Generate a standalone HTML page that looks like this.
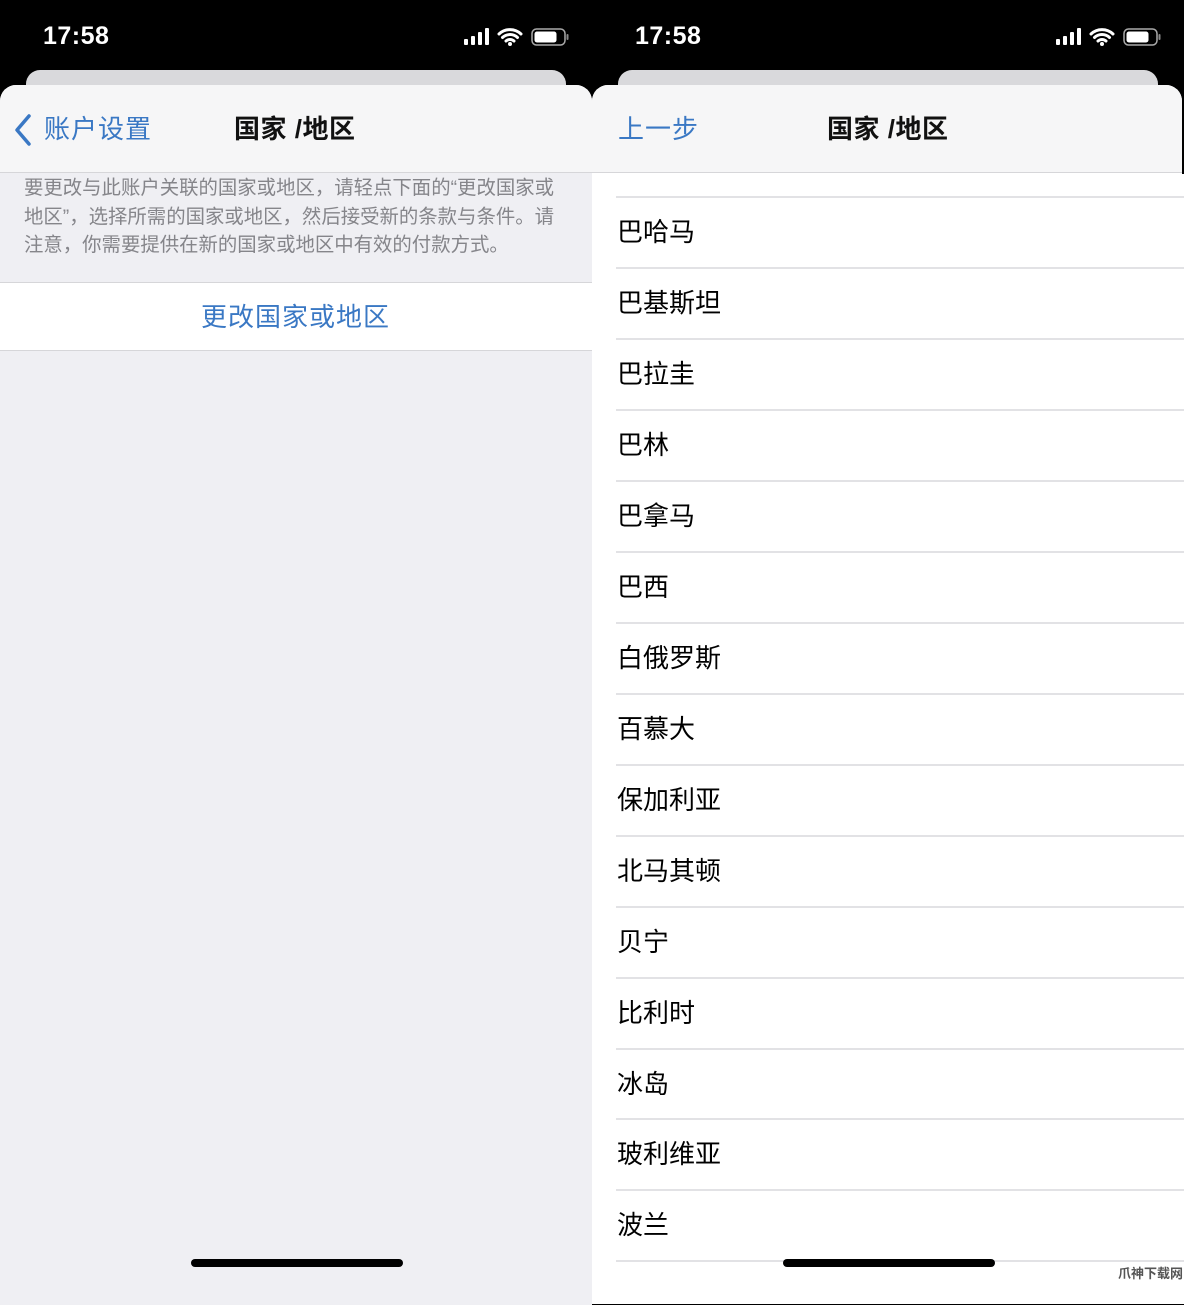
<!DOCTYPE html>
<html><head><meta charset="utf-8"><style>
*{margin:0;padding:0;box-sizing:border-box}
body{width:1184px;height:1280px;background:#000;position:relative;overflow:hidden;font-family:"Liberation Sans","Noto Sans CJK SC",sans-serif}
.a{position:absolute}
.time{color:#fff;font-size:25px;font-weight:600;top:22px;letter-spacing:0.5px}
.card{background:#d9d9dc;border-radius:14px;top:70px;height:40px}
.sheet{top:85px;height:1220px;border-radius:16px 16px 0 0;overflow:hidden}
.nav{position:absolute;left:0;right:0;top:0;height:88px;background:#f6f6f7;border-bottom:1px solid #d6d6d9}
.t{font-size:26px;white-space:nowrap;line-height:1}
.blue{color:#3a78c4}
.sep{position:absolute;left:24px;right:0;height:2px;background:#e2e2e5}
.home{background:#000;height:8px;border-radius:4px;top:1259px;width:212px}
.title{font-weight:bold;color:#111;letter-spacing:0.5px}
</style></head><body>
<div class="a time" style="left:43px">17:58</div>
<div class="a time" style="left:635px">17:58</div>
<svg class="a" style="left:462px;top:26px" width="110" height="22" viewBox="0 0 110 22">
<rect x="2" y="13" width="4" height="6" rx="1" fill="#fff"/><rect x="9" y="10" width="4" height="9" rx="1" fill="#fff"/><rect x="16" y="6" width="4" height="13" rx="1" fill="#fff"/><rect x="23" y="2" width="4" height="17" rx="1" fill="#fff"/>
<path d="M37 8a16 16 0 0 1 22 0M40.5 11.5a11 11 0 0 1 15 0M44 15a6 6 0 0 1 8 0" stroke="#fff" stroke-width="3" fill="none" stroke-linecap="round"/><circle cx="48" cy="18" r="2" fill="#fff"/>
<rect x="70" y="3" width="33" height="16" rx="4.5" fill="none" stroke="#aaa" stroke-width="1.5"/><rect x="72.5" y="5.5" width="22" height="11" rx="2.5" fill="#fff"/><rect x="104.5" y="8" width="2" height="6" rx="1" fill="#888"/>
</svg>
<svg class="a" style="left:1054px;top:26px" width="110" height="22" viewBox="0 0 110 22">
<rect x="2" y="13" width="4" height="6" rx="1" fill="#fff"/><rect x="9" y="10" width="4" height="9" rx="1" fill="#fff"/><rect x="16" y="6" width="4" height="13" rx="1" fill="#fff"/><rect x="23" y="2" width="4" height="17" rx="1" fill="#fff"/>
<path d="M37 8a16 16 0 0 1 22 0M40.5 11.5a11 11 0 0 1 15 0M44 15a6 6 0 0 1 8 0" stroke="#fff" stroke-width="3" fill="none" stroke-linecap="round"/><circle cx="48" cy="18" r="2" fill="#fff"/>
<rect x="70" y="3" width="33" height="16" rx="4.5" fill="none" stroke="#aaa" stroke-width="1.5"/><rect x="72.5" y="5.5" width="22" height="11" rx="2.5" fill="#fff"/><rect x="104.5" y="8" width="2" height="6" rx="1" fill="#888"/>
</svg>
<div class="a card" style="left:26px;width:540px"></div>
<div class="a card" style="left:618px;width:540px"></div>

<div class="a sheet" style="left:0;width:592px;background:#efeff3">
  <div class="nav"></div>
  <svg class="a" style="left:12px;top:28px" width="22" height="34" viewBox="0 0 22 34"><path d="M17 3L5 17l12 14" stroke="#3a78c4" stroke-width="3.5" fill="none" stroke-linecap="round" stroke-linejoin="round"/></svg>
  <div class="a t blue" style="left:44px;top:31px;letter-spacing:1px">账户设置</div>
  <div class="a t title" style="left:234px;top:31px">国家 /地区</div>
  <div class="a" style="left:24px;top:89px;width:570px;font-size:19.4px;line-height:28.5px;color:#85858a;white-space:nowrap">要更改与此账户关联的国家或地区，请轻点下面的“更改国家或<br>地区”，选择所需的国家或地区，然后接受新的条款与条件。请<br>注意，你需要提供在新的国家或地区中有效的付款方式。</div>
  <div class="a" style="left:0;right:0;top:197px;height:69px;background:#fff;border-top:1px solid #d6d6d9;border-bottom:1px solid #d6d6d9"></div>
  <div class="a t blue" style="left:201px;top:219px;letter-spacing:1px">更改国家或地区</div>
</div>

<div class="a" style="left:592px;top:174px;width:592px;height:1130px;background:#fff"></div>
<div class="a sheet" style="left:592px;width:590px;background:#fff;height:89px">
  <div class="nav"></div>
  <div class="a t blue" style="left:26px;top:31px;letter-spacing:1px">上一步</div>
  <div class="a t title" style="left:235px;top:31px">国家 /地区</div>
</div>
<div class="a" style="left:592px;top:174px;width:592px;height:1130px;overflow:hidden">
  <div class="sep" style="top:22px"></div>
  <div class="a t" style="left:25px;top:45px">巴哈马</div><div class="sep" style="top:93px"></div>
  <div class="a t" style="left:25px;top:116px">巴基斯坦</div><div class="sep" style="top:164px"></div>
  <div class="a t" style="left:25px;top:187px">巴拉圭</div><div class="sep" style="top:235px"></div>
  <div class="a t" style="left:25px;top:258px">巴林</div><div class="sep" style="top:306px"></div>
  <div class="a t" style="left:25px;top:329px">巴拿马</div><div class="sep" style="top:377px"></div>
  <div class="a t" style="left:25px;top:400px">巴西</div><div class="sep" style="top:448px"></div>
  <div class="a t" style="left:25px;top:471px">白俄罗斯</div><div class="sep" style="top:519px"></div>
  <div class="a t" style="left:25px;top:542px">百慕大</div><div class="sep" style="top:590px"></div>
  <div class="a t" style="left:25px;top:613px">保加利亚</div><div class="sep" style="top:661px"></div>
  <div class="a t" style="left:25px;top:684px">北马其顿</div><div class="sep" style="top:732px"></div>
  <div class="a t" style="left:25px;top:755px">贝宁</div><div class="sep" style="top:803px"></div>
  <div class="a t" style="left:25px;top:826px">比利时</div><div class="sep" style="top:874px"></div>
  <div class="a t" style="left:25px;top:897px">冰岛</div><div class="sep" style="top:944px"></div>
  <div class="a t" style="left:25px;top:967px">玻利维亚</div><div class="sep" style="top:1015px"></div>
  <div class="a t" style="left:25px;top:1038px">波兰</div><div class="sep" style="top:1086px"></div>
</div>
<div class="a home" style="left:191px"></div>
<div class="a home" style="left:783px"></div>
<div class="a" style="left:1118px;top:1263px;font-size:13px;color:#555;font-weight:bold">爪神下载网</div>
</body></html>
